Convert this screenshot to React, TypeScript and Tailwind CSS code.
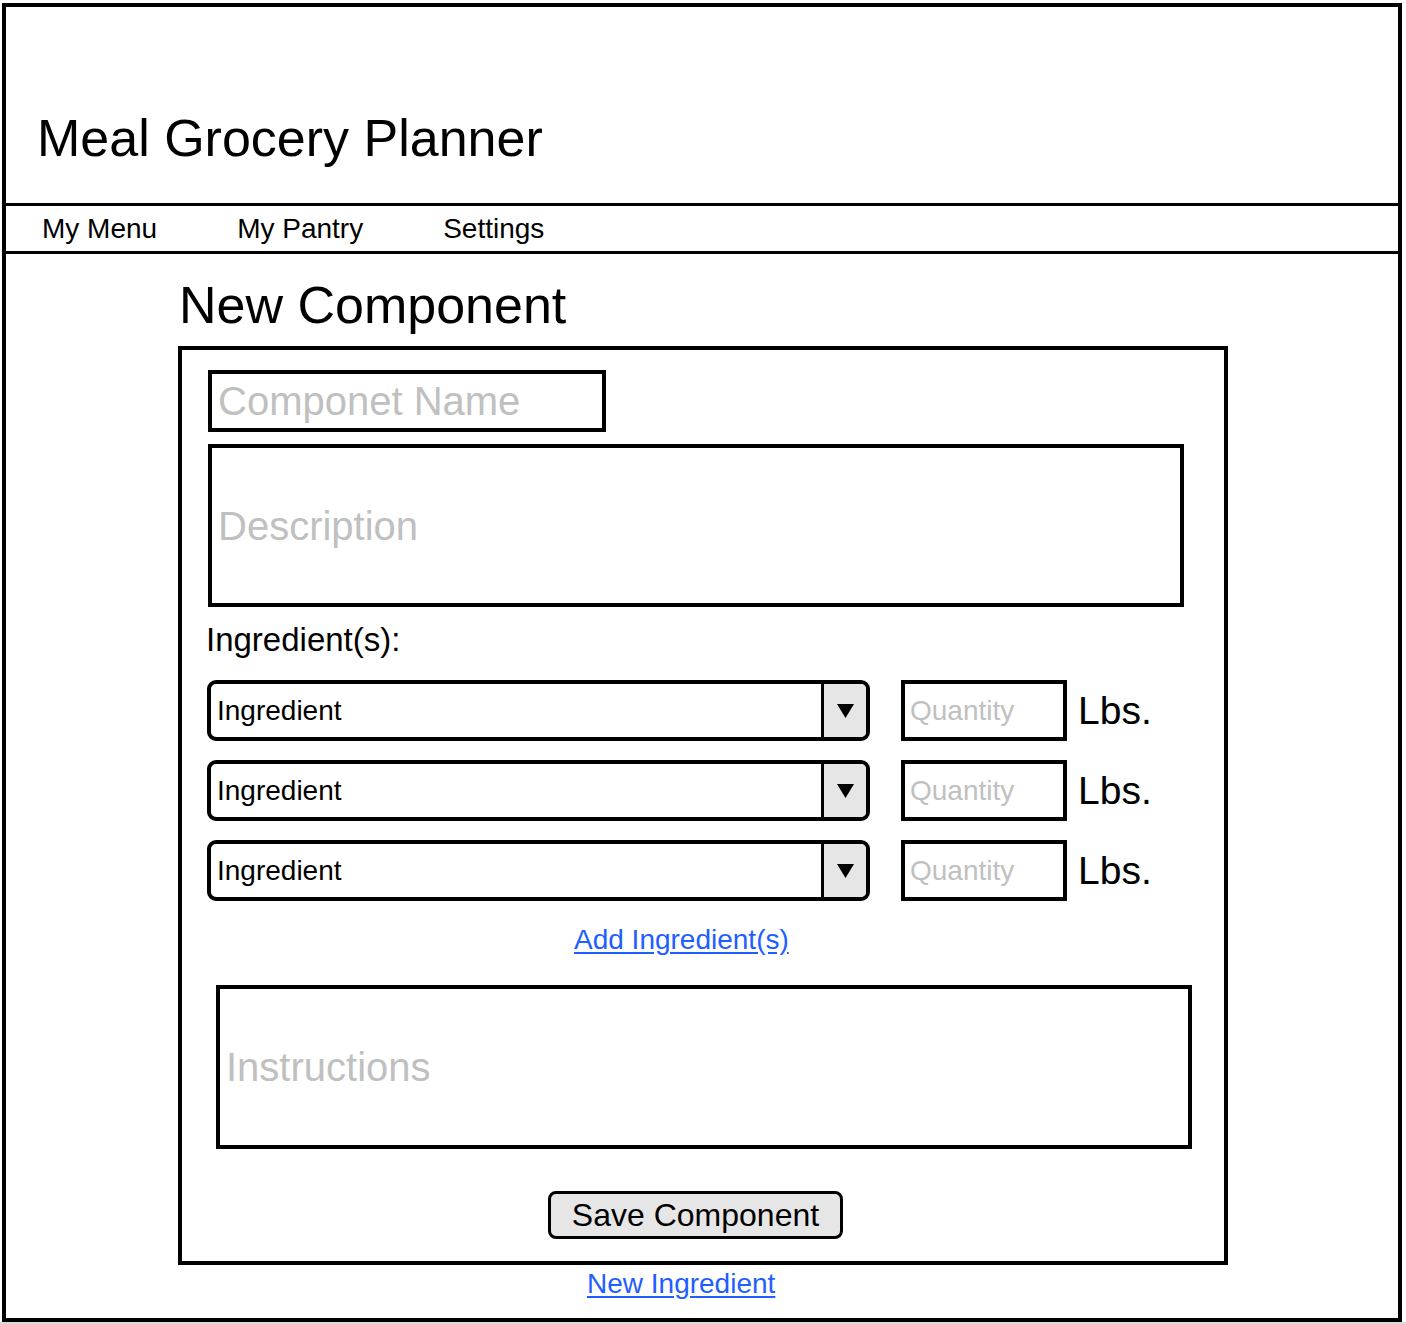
import React from "react";

const ingredientRows = [1, 2, 3];

function Caret() {
  return (
    <svg width="17" height="14" viewBox="0 0 17 14" aria-hidden="true">
      <polygon points="0,0 17,0 8.5,14" fill="#000" />
    </svg>
  );
}

function IngredientRow() {
  return (
    <div className="flex items-center h-[61px]">
      {/* select */}
      <div className="flex w-[663px] h-full border-4 border-black rounded-[9px] overflow-hidden bg-white">
        <div className="flex-1 flex items-center pl-[6px] text-[28px] text-black">Ingredient</div>
        <div className="w-[45px] h-full border-l-[3px] border-black bg-[#e6e6e6] flex items-center justify-center">
          <Caret />
        </div>
      </div>
      {/* quantity */}
      <div className="ml-[31px] w-[166px] h-full border-4 border-black flex items-center pl-[5px] text-[28px] text-[#c0c0c0]">
        Quantity
      </div>
      <span className="ml-[11px] text-[39px] leading-none text-black">Lbs.</span>
    </div>
  );
}

export default function App() {
  return (
    <div className="bg-white min-h-[1324px] font-['Liberation_Sans',Arial,sans-serif] text-black">
      <div className="ml-[2px] pt-[3px]">
        <div className="w-[1400px] h-[1319px] border-4 border-black flex flex-col">
          {/* Header */}
          <header className="pt-[101px] pb-[35px] pl-[31px] border-b-[3px] border-black">
            <h1 className="text-[52px] leading-[60px]">Meal Grocery Planner</h1>
          </header>

          {/* Nav */}
          <nav className="h-[48px] flex items-center gap-[80px] pl-[36px] border-b-[3px] border-black text-[28px]">
            <a>My Menu</a>
            <a>My Pantry</a>
            <a>Settings</a>
          </nav>

          {/* Main */}
          <main className="pl-[172px] flex flex-col items-start">
            <h2 className="mt-[21px] ml-[1px] text-[52px] leading-[60px]">New Component</h2>

            <form className="mt-[11px] w-[1050px] h-[919px] border-4 border-black flex flex-col items-start pt-[20px]">
              <div className="ml-[26px] w-[398px] h-[62px] border-4 border-black flex items-center pl-[6px] text-[40px] text-[#c0c0c0]">
                Componet Name
              </div>

              <div className="mt-[12px] ml-[26px] w-[976px] h-[163px] border-4 border-black flex items-center pl-[6px] text-[40px] text-[#c0c0c0]">
                Description
              </div>

              <p className="mt-[13px] ml-[24px] text-[33px] leading-[40px]">Ingredient(s):</p>

              <div className="mt-[20px] ml-[25px] flex flex-col gap-[19px]">
                {ingredientRows.map((r) => (
                  <IngredientRow key={r} />
                ))}
              </div>

              <a className="mt-[23px] ml-[392px] text-[28px] leading-[32px] text-[#1f5eff] underline underline-offset-[3px] cursor-pointer">
                Add Ingredient(s)
              </a>

              <div className="mt-[29px] ml-[34px] w-[976px] h-[164px] border-4 border-black flex items-center pl-[6px] text-[40px] text-[#c0c0c0]">
                Instructions
              </div>

              <button
                type="button"
                className="mt-[42px] ml-[366px] w-[295px] h-[48px] border-[3px] border-black rounded-[8px] bg-[#e6e6e6] text-[32px] leading-none flex items-center justify-center"
              >
                Save Component
              </button>
            </form>

            <a className="mt-[3px] ml-[409px] text-[28px] leading-[32px] text-[#1f5eff] underline underline-offset-[3px] cursor-pointer">
              New Ingredient
            </a>
          </main>
        </div>
      </div>
      <div className="h-[2px] bg-[#d9d9d9]" />
    </div>
  );
}
